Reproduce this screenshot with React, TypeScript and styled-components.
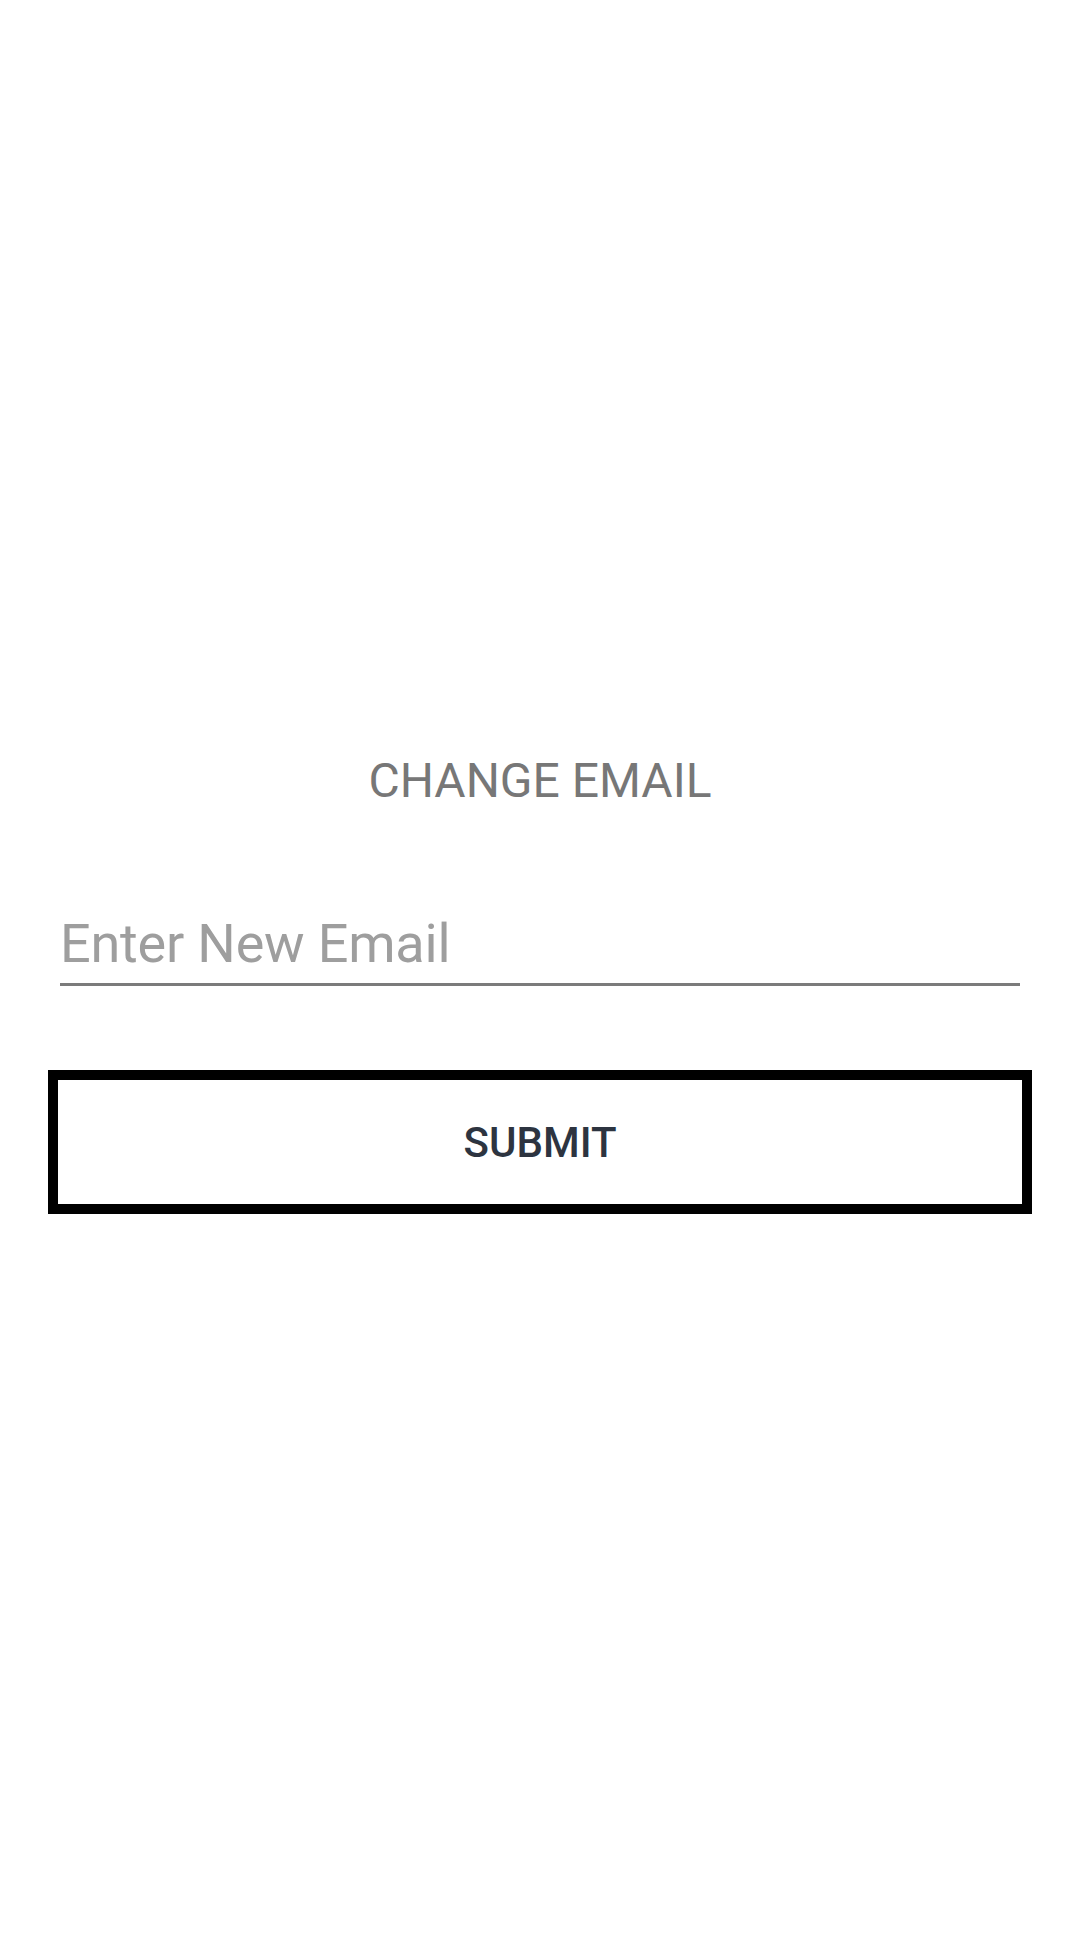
import React from "react";
import styled, { createGlobalStyle } from "styled-components";

const GlobalStyle = createGlobalStyle`
  html, body {
    margin: 0;
    padding: 0;
    background: #ffffff;
    font-family: Roboto, "Liberation Sans", Arial, sans-serif;
  }
  * { box-sizing: border-box; }
`;

const Page = styled.div`
  width: 1080px;
  min-height: 1936px;
  background: #ffffff;
  display: flex;
  flex-direction: column;
  align-items: center;
  padding-top: 753px;
`;

const Title = styled.h1`
  margin: 0;
  font-family: Roboto, "Liberation Sans", Arial, sans-serif;
  font-size: 48px;
  line-height: 56px;
  font-weight: 400;
  color: #777777;
  text-align: center;
`;

const EmailInput = styled.input`
  margin-top: 94px;
  width: 960px;
  height: 83px;
  padding: 0;
  border: none;
  border-bottom: 3px solid #7b7b7b;
  outline: none;
  background: transparent;
  font-family: Roboto, "Liberation Sans", Arial, sans-serif;
  font-size: 54px;
  letter-spacing: -0.2px;
  color: #333;
  &::placeholder {
    color: #9e9e9e;
  }
`;

const SubmitButton = styled.button`
  margin-top: 84px;
  width: 984px;
  height: 144px;
  border: 10px solid #000000;
  background: #ffffff;
  font-family: Roboto, "Liberation Sans", Arial, sans-serif;
  font-size: 42px;
  font-weight: 500;
  color: #2d3440;
  display: flex;
  align-items: center;
  justify-content: center;
  cursor: pointer;
`;

export default function App() {
  return (
    <>
      <GlobalStyle />
      <Page>
        <Title>CHANGE EMAIL</Title>
        <EmailInput type="email" placeholder="Enter New Email" />
        <SubmitButton type="button">SUBMIT</SubmitButton>
      </Page>
    </>
  );
}
